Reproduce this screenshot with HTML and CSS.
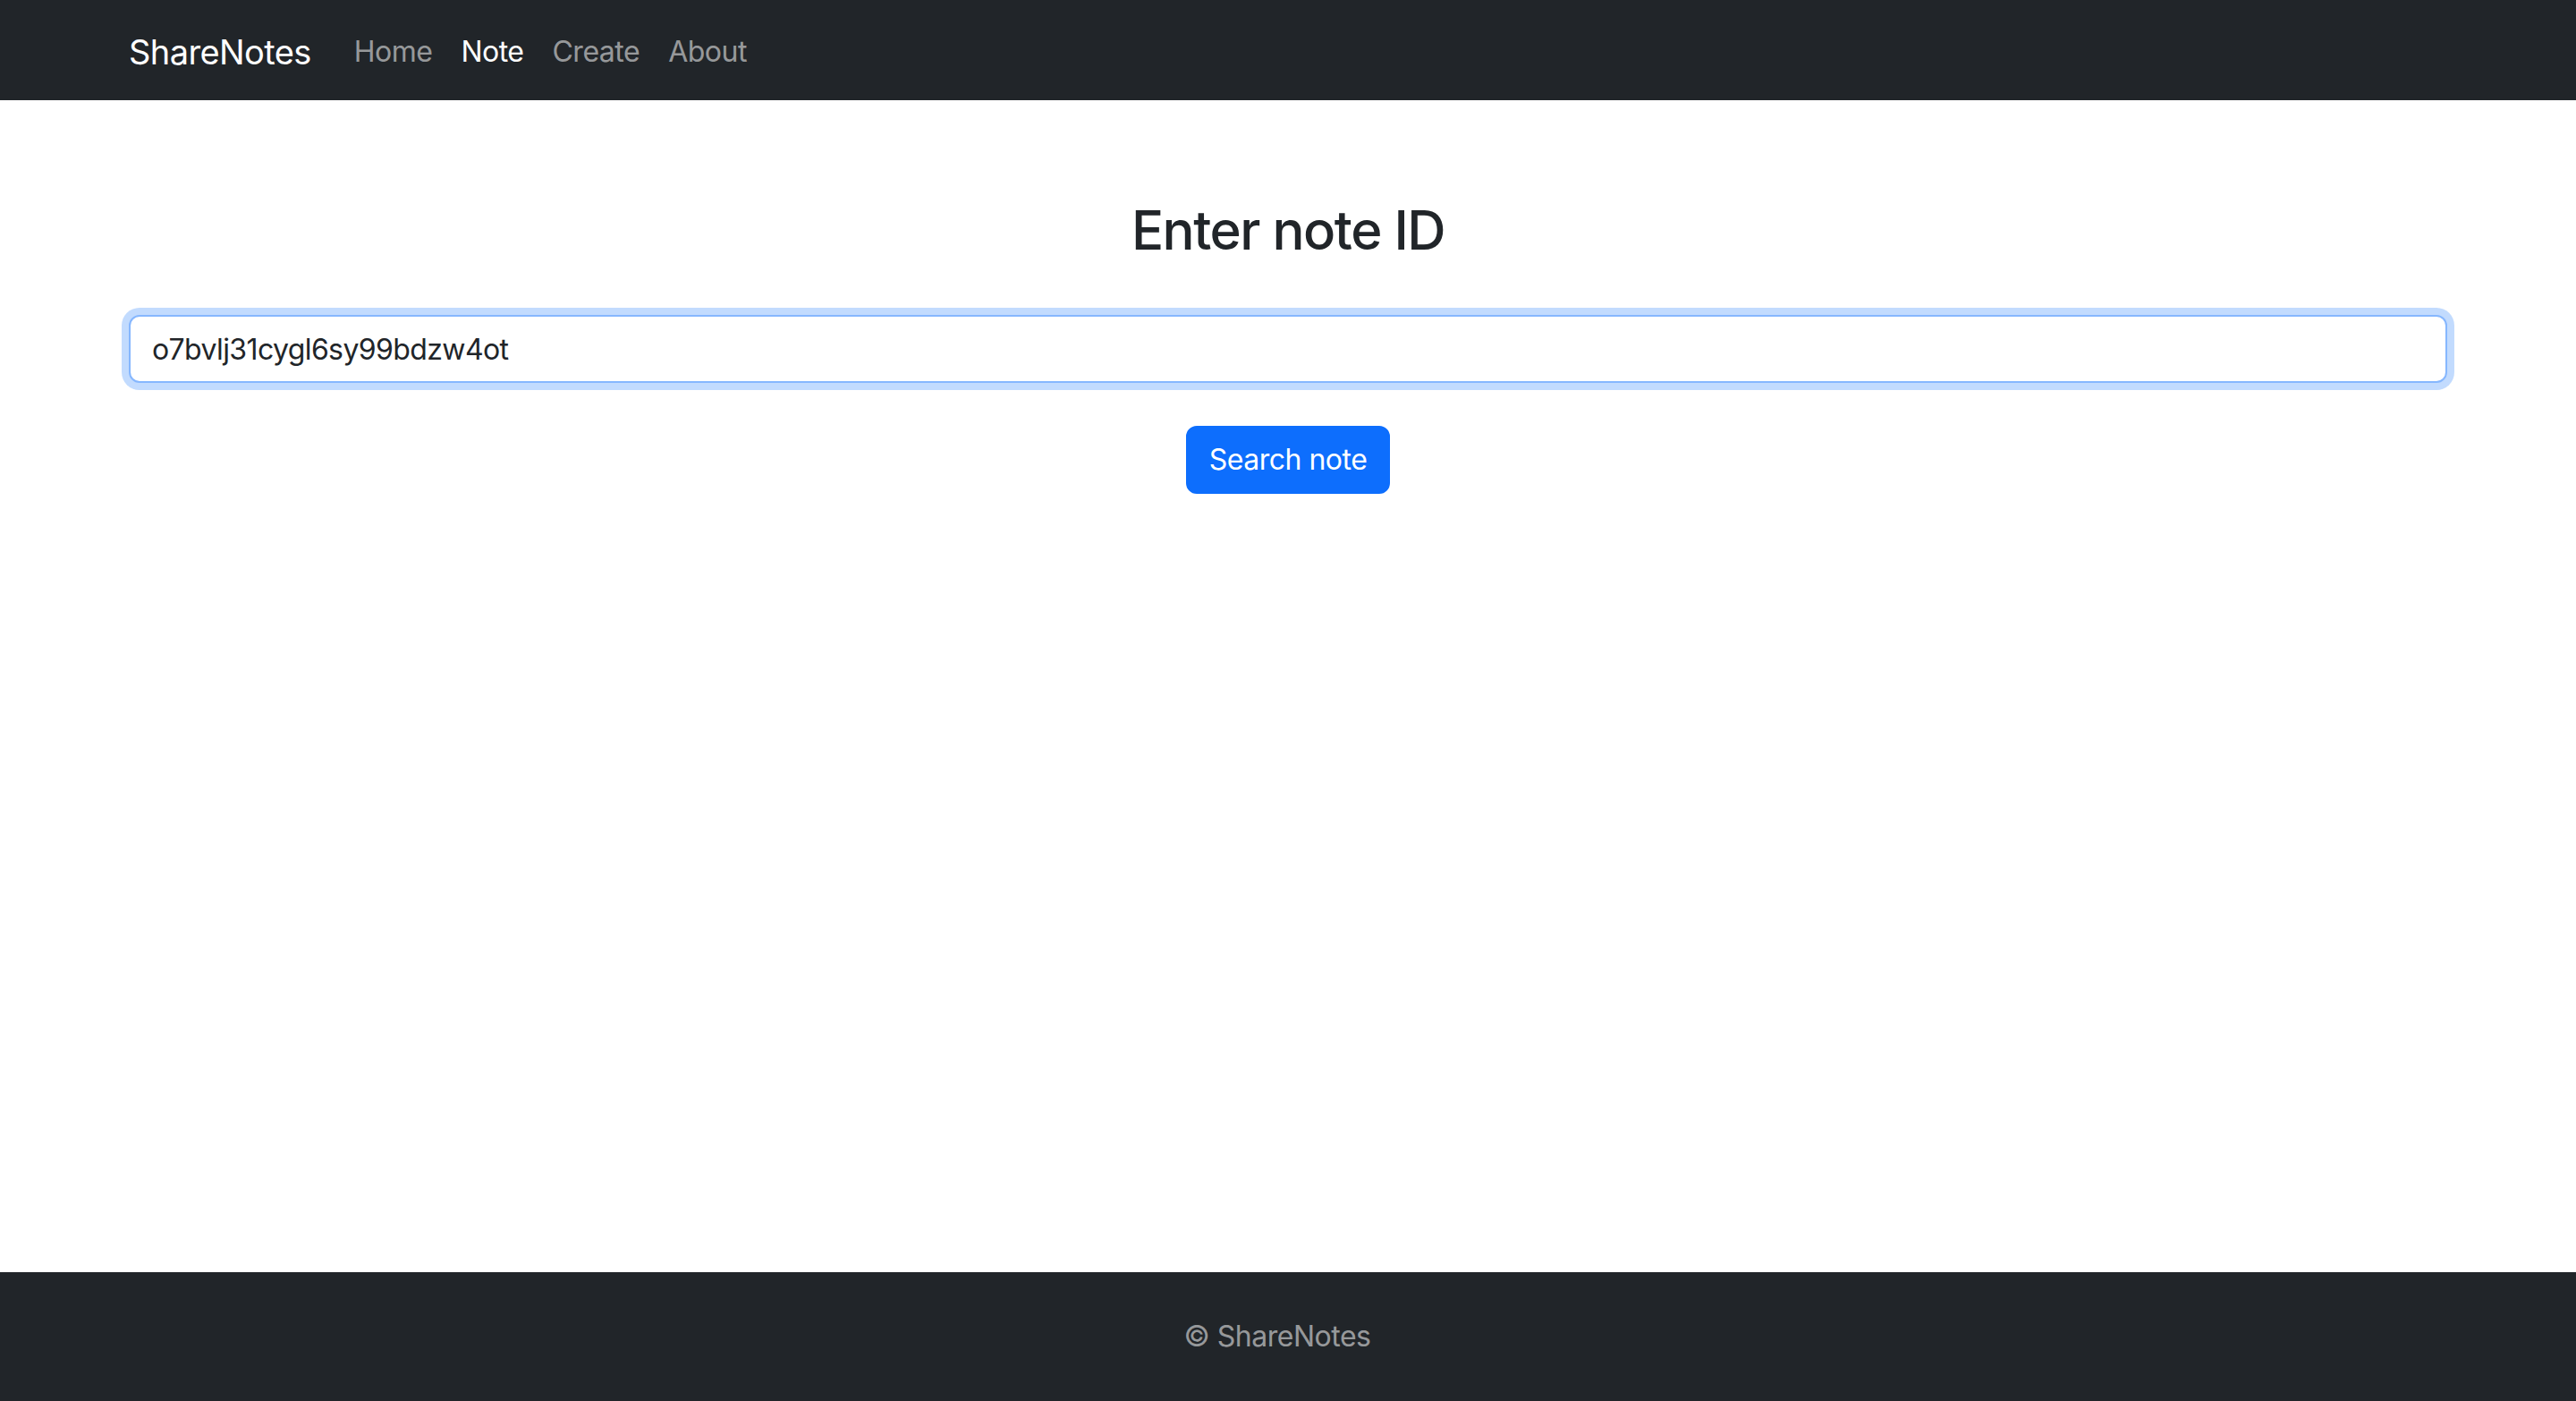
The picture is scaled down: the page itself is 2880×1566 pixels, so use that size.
FILE: index.html
```html
<!DOCTYPE html>
<html lang="en">
<head>
<meta charset="utf-8">
<title>ShareNotes</title>
<link rel="stylesheet" href="styles.css">
</head>
<body>
<nav class="navbar">
  <div class="container nav-inner">
    <a class="brand" href="#">ShareNotes</a>
    <ul class="nav-links">
      <li><a class="nav-link" href="#">Home</a></li>
      <li><a class="nav-link active" href="#">Note</a></li>
      <li><a class="nav-link" href="#">Create</a></li>
      <li><a class="nav-link" href="#">About</a></li>
    </ul>
  </div>
</nav>
<main class="main">
  <div class="container content">
    <h2 class="title">Enter note ID</h2>
    <form class="search-form">
      <input class="form-control" type="text" value="o7bvlj31cygl6sy99bdzw4ot">
      <button class="btn-primary" type="button">Search note</button>
    </form>
  </div>
</main>
<footer class="footer">
  <span class="footer-text">© ShareNotes</span>
</footer>
</body>
</html>
```
FILE: styles.css
```css
* { box-sizing: border-box; }
html, body { margin: 0; padding: 0; }
body {
  font-family: Inter, "Noto Sans", "Liberation Sans", sans-serif;
  font-size: 32px;
  line-height: 1.5;
  color: #212529;
  background: #fff;
  min-height: 100vh;
  display: flex;
  flex-direction: column;
}
.container {
  width: 100%;
  max-width: 2640px;
  margin: 0 auto;
  padding: 0 24px;
}
.navbar {
  background: #212529;
  height: 112px;
  display: flex;
  align-items: center;
}
.nav-inner {
  display: flex;
  align-items: center;
  padding-top: 4px;
}
.brand {
  color: #fff;
  text-decoration: none;
  font-size: 38px;
  line-height: 1.5;
  margin-right: 32px;
  letter-spacing: -0.6px;
}
.nav-links {
  list-style: none;
  margin: 0;
  padding: 0;
  display: flex;
}
.nav-link {
  display: block;
  padding: 16px 16px;
  color: rgba(255, 255, 255, 0.55);
  text-decoration: none;
  letter-spacing: -0.5px;
}
.nav-link.active { color: #fff; }
.main { flex: 1 0 auto; }
.content {
  padding-top: 108px;
}
.title {
  margin: 0 0 57px;
  font-size: 60px;
  font-weight: 500;
  line-height: 1.25;
  text-align: center;
  letter-spacing: -1.5px;
}
.search-form {
  display: flex;
  flex-direction: column;
  align-items: center;
}
.form-control {
  display: block;
  width: 100%;
  height: 76px;
  padding: 12px 24px;
  font-family: inherit;
  font-size: 32px;
  line-height: 1.5;
  color: #212529;
  background: #fff;
  border: 2px solid #86b7fe;
  border-radius: 12px;
  box-shadow: 0 0 0 8px rgba(13, 110, 253, 0.25);
  outline: none;
  letter-spacing: -0.6px;
}
.btn-primary {
  margin-top: 48px;
  padding: 12px 24px;
  font-family: inherit;
  font-size: 32px;
  line-height: 1.5;
  color: #fff;
  background: #0d6efd;
  border: 2px solid #0d6efd;
  border-radius: 12px;
  letter-spacing: -0.5px;
}
.footer {
  background: #212529;
  padding: 48px 0;
  text-align: center;
  color: rgba(255, 255, 255, 0.55);
}
.footer-text {
  display: inline-block;
  padding-right: 24px;
  letter-spacing: -0.5px;
}
```
